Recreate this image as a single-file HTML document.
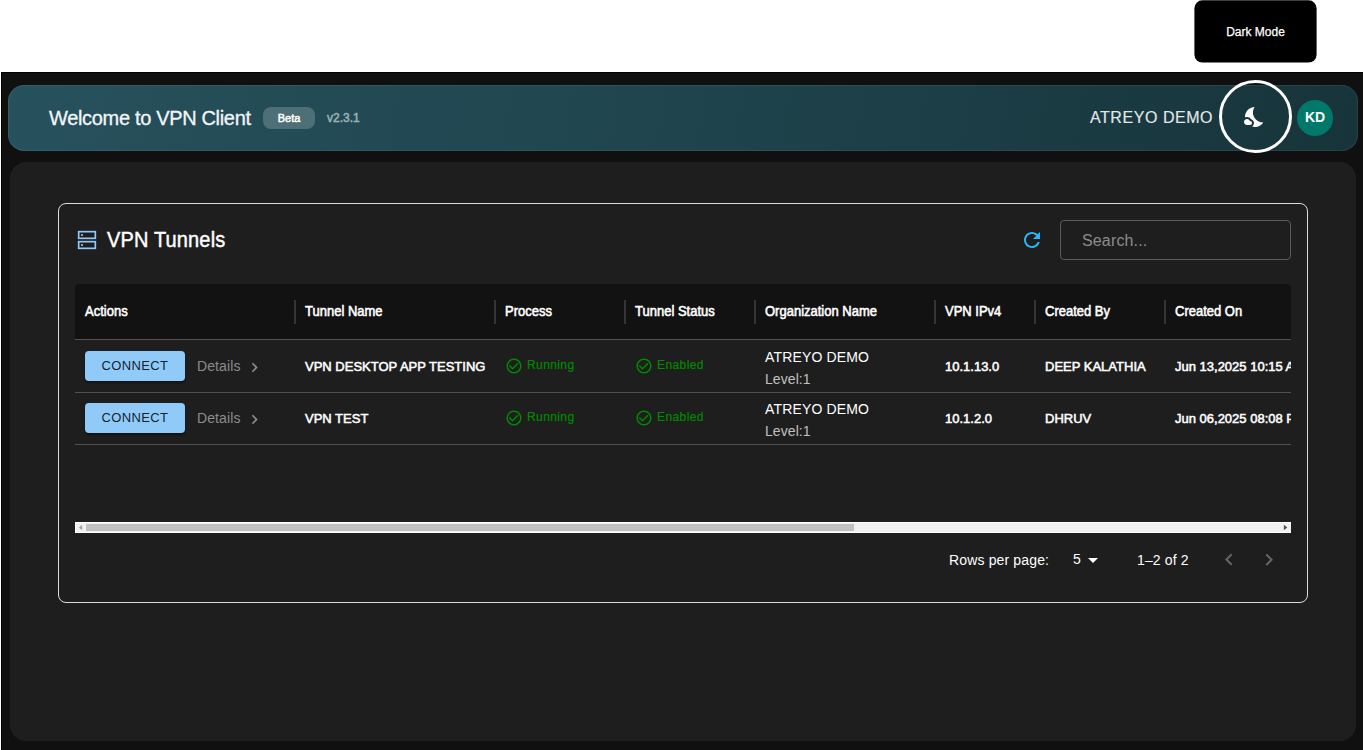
<!DOCTYPE html>
<html lang="en">
<head>
<meta charset="utf-8">
<title>VPN Client</title>
<style>
*{box-sizing:border-box;margin:0;padding:0}
html,body{width:1363px;height:750px;overflow:hidden;background:#fff;font-family:"Liberation Sans",Arial,sans-serif;}
body{position:relative}
.tipbg{position:absolute;left:1190px;top:0;width:132px;height:66px}
.tooltip{position:absolute;left:1194px;top:25px;width:123px;text-align:center;color:#fff;font-size:12px;line-height:14px;-webkit-text-stroke:0.25px #fff}
.app{position:absolute;left:1px;top:72px;width:1362px;height:678px;background:#101010;border-left:1px solid #000;border-top:1px solid #000}
.header{position:absolute;left:8px;top:85px;width:1350px;height:66px;border-radius:16px;background:linear-gradient(100deg,#27515d 0%,#1f444d 50%,#17343a 100%);box-shadow:inset 0 0 0 1px rgba(255,255,255,0.07)}
.h-title{position:absolute;left:41px;top:21px;font-size:20px;line-height:24px;color:#f2f6f7;letter-spacing:-0.33px;white-space:nowrap;-webkit-text-stroke:0.3px #f2f6f7;transform:scaleY(1.05);transform-origin:0 19px}
.beta{position:absolute;left:255px;top:22px;width:52px;height:22px;border-radius:8px;background:rgba(255,255,255,0.2);color:#fff;font-size:11px;-webkit-text-stroke:0.5px #fff;text-align:center;line-height:22px}
.ver{position:absolute;left:319px;top:26px;font-size:12px;color:#9db2b7;line-height:14px;-webkit-text-stroke:0.5px #9db2b7}
.org{position:absolute;left:1082px;top:23px;font-size:16px;line-height:20px;color:#e3e9e9;white-space:nowrap;letter-spacing:0.55px;-webkit-text-stroke:0.15px #e3e9e9}
.ring{position:absolute;left:1218.9px;top:79.7px;width:73.4px;height:73.4px;border-radius:50%;border:3.2px solid #fff}
.moon{position:absolute;left:1243px;top:105px;width:24px;height:24px;fill:#fff}
.avatar{position:absolute;left:1297px;top:100px;width:36px;height:36px;border-radius:50%;background:#00796b;color:#fff;font-size:14px;font-weight:700;text-align:center;line-height:34px}
.main{position:absolute;left:10px;top:162px;width:1346px;height:579px;background:#1e1e1e;border-radius:16px}
.card{position:absolute;left:58px;top:203px;width:1250px;height:400px;border:1px solid #dcdcdc;border-radius:8px}
.c-icon{position:absolute;left:77px;top:230px;width:20px;height:20px}
.c-title{position:absolute;left:107px;top:228px;font-size:20px;line-height:24px;color:#fff;white-space:nowrap;letter-spacing:0.15px;-webkit-text-stroke:0.4px #fff;transform:scaleY(1.06);transform-origin:0 19px}
.refresh{position:absolute;left:1020px;top:228px;width:24px;height:24px;fill:#29b6f6}
.search{position:absolute;left:1060px;top:220px;width:231px;height:40px;border:1px solid #5a5a5a;border-radius:4px;color:#8c8c8c;font-size:16px;line-height:40px;padding-left:21px;letter-spacing:0.15px}
.thead{position:absolute;left:75px;top:284px;width:1216px;height:55px;background:#121212;border-radius:4px 4px 0 0;overflow:hidden}
.th{position:absolute;top:0;height:55px;line-height:55px;font-size:13px;color:#fff;white-space:nowrap;-webkit-text-stroke:0.52px #fff;transform:translateY(-0.3px) scaleY(1.06);transform-origin:0 32.6px}
.sep{position:absolute;top:16px;width:2px;height:24px;background:#353535}
.hline{position:absolute;left:75px;width:1216px;height:1px;background:#515151}
.row{position:absolute;left:75px;width:1216px;height:52px;overflow:hidden}
.cell{position:absolute;top:1px;height:52px;line-height:52px;font-size:13px;color:#fff;white-space:nowrap;-webkit-text-stroke:0.52px #fff;transform:scaleY(1.05);transform-origin:0 30.5px}
.btn{position:absolute;left:10px;top:11px;width:100px;height:30px;border-radius:4px;background:#90caf9;color:rgba(0,0,0,0.87);font-size:13px;letter-spacing:0.37px;text-align:center;line-height:29px;box-shadow:0 2px 2px rgba(0,0,0,0.4)}
.details{position:absolute;left:122px;top:0;line-height:53px;font-size:14px;letter-spacing:0.1px;color:#8c8c8c}
.chev{position:absolute;left:170.2px;top:17.85px;width:19px;height:19px;fill:#8f8f8f}
.status{position:absolute;top:0;height:52px;line-height:50px;font-size:12px;color:#008a00;letter-spacing:0.4px;-webkit-text-stroke:0.2px #008a00}
.status svg{position:absolute;left:-1px;top:17px;width:18px;height:18px;fill:#008a00}
.org1{position:absolute;left:690px;top:8px;font-size:14px;line-height:18px;color:#fff;letter-spacing:0.15px}
.org2{position:absolute;left:690px;top:30px;font-size:14px;line-height:18px;color:#c0c0c0;letter-spacing:0.07px}
.scroll{position:absolute;left:75px;top:522px;width:1216px;height:11px;background:#f1f1f1;border:1px solid #fff;border-right:0}
.thumb{position:absolute;left:10px;top:1px;width:768px;height:7px;background:#c1c1c1}
.sarr{position:absolute;top:0;width:11px;height:9px}
.foot{position:absolute;top:551px;font-size:14px;line-height:18px;color:#fff;white-space:nowrap;letter-spacing:0.15px}
.ficon{position:absolute;width:24px;height:24px}
</style>
</head>
<body>
<svg class="tipbg" viewBox="0 0 132 66"><rect x="4.4" y="0.3" width="122.2" height="62.3" rx="8" fill="#000"/></svg>
<div class="tooltip">Dark Mode</div>
<div class="app"></div>
<div class="header">
  <div class="h-title">Welcome to VPN Client</div>
  <div class="beta">Beta</div>
  <div class="ver">v2.3.1</div>
  <div class="org">ATREYO DEMO</div>
</div>
<div class="ring"></div>
<svg class="moon" viewBox="0 0 24 24"><path d="M11.1 12.08c-2.33-4.51-.5-8.48.53-10.07C6.27 2.2 1.98 6.59 1.98 12c0 .14.02.28.02.42.62-.27 1.29-.42 2-.42 1.66 0 3.18.83 4.1 2.15 1.67.48 2.9 2.02 2.9 3.85 0 1.52-.87 2.83-2.12 3.51.98.32 2.03.5 3.11.5 3.5 0 6.58-1.8 8.37-4.52-2.36.23-6.98-.97-9.26-5.41z"/><path d="M7 16h-.18C6.4 14.84 5.3 14 4 14c-1.66 0-3 1.34-3 3s1.34 3 3 3h3c1.1 0 2-.9 2-2s-.9-2-2-2z"/></svg>
<div class="avatar">KD</div>
<div class="main"></div>
<div class="card"></div>
<svg class="c-icon" viewBox="0 0 24 24" fill="none" stroke="#90caf9" stroke-width="2"><rect x="2" y="2" width="20" height="8"/><rect x="2" y="14" width="20" height="8"/><circle cx="6" cy="6" r="1.3" fill="#90caf9" stroke="none"/><circle cx="6" cy="18" r="1.3" fill="#90caf9" stroke="none"/></svg>
<div class="c-title">VPN Tunnels</div>
<svg class="refresh" viewBox="0 0 24 24"><path d="M17.65 6.35C16.2 4.9 14.21 4 12 4c-4.42 0-7.99 3.58-7.99 8s3.57 8 7.99 8c3.73 0 6.84-2.55 7.73-6h-2.08c-.82 2.33-3.04 4-5.65 4-3.31 0-6-2.69-6-6s2.69-6 6-6c1.66 0 3.14.69 4.22 1.78L13 11h7V4l-2.35 2.35z"/></svg>
<div class="search">Search...</div>
<div class="thead">
  <div class="th" style="left:10px">Actions</div>
  <div class="sep" style="left:219px"></div>
  <div class="th" style="left:230px">Tunnel Name</div>
  <div class="sep" style="left:419px"></div>
  <div class="th" style="left:430px">Process</div>
  <div class="sep" style="left:549px"></div>
  <div class="th" style="left:560px">Tunnel Status</div>
  <div class="sep" style="left:679px"></div>
  <div class="th" style="left:690px">Organization Name</div>
  <div class="sep" style="left:859px"></div>
  <div class="th" style="left:870px">VPN IPv4</div>
  <div class="sep" style="left:959px"></div>
  <div class="th" style="left:970px">Created By</div>
  <div class="sep" style="left:1089px"></div>
  <div class="th" style="left:1100px">Created On</div>
</div>
<div class="hline" style="top:339px"></div>
<div class="row" style="top:340px">
  <div class="btn">CONNECT</div>
  <div class="details">Details</div>
  <svg class="chev" viewBox="0 0 24 24"><path d="M10 6 8.590 7.410 13.170 12l-4.580 4.590L10 18l6-6z"/></svg>
  <div class="cell" style="left:230px">VPN DESKTOP APP TESTING</div>
  <div class="status" style="left:431px;padding-left:21px"><svg viewBox="0 0 24 24"><path d="M16.59 7.58 10 14.17l-3.59-3.58L5 12l5 5 8-8zM12 2C6.48 2 2 6.480 2 12s4.480 10 10 10 10-4.480 10-10S17.520 2 12 2zm0 18c-4.420 0-8-3.580-8-8s3.580-8 8-8 8 3.580 8 8-3.580 8-8 8z"/></svg>Running</div>
  <div class="status" style="left:561px;padding-left:21px"><svg viewBox="0 0 24 24"><path d="M16.59 7.58 10 14.17l-3.59-3.58L5 12l5 5 8-8zM12 2C6.48 2 2 6.480 2 12s4.480 10 10 10 10-4.480 10-10S17.520 2 12 2zm0 18c-4.420 0-8-3.580-8-8s3.580-8 8-8 8 3.580 8 8-3.580 8-8 8z"/></svg>Enabled</div>
  <div class="org1">ATREYO DEMO</div>
  <div class="org2">Level:1</div>
  <div class="cell" style="left:870px">10.1.13.0</div>
  <div class="cell" style="left:970px">DEEP KALATHIA</div>
  <div class="cell" style="left:1100px">Jun 13,2025 10:15 AM</div>
</div>
<div class="hline" style="top:392px"></div>
<div class="row" style="top:392px">
  <div class="btn">CONNECT</div>
  <div class="details">Details</div>
  <svg class="chev" viewBox="0 0 24 24"><path d="M10 6 8.590 7.410 13.170 12l-4.580 4.590L10 18l6-6z"/></svg>
  <div class="cell" style="left:230px">VPN TEST</div>
  <div class="status" style="left:431px;padding-left:21px"><svg viewBox="0 0 24 24"><path d="M16.59 7.58 10 14.17l-3.59-3.58L5 12l5 5 8-8zM12 2C6.48 2 2 6.480 2 12s4.480 10 10 10 10-4.480 10-10S17.520 2 12 2zm0 18c-4.420 0-8-3.580-8-8s3.580-8 8-8 8 3.580 8 8-3.580 8-8 8z"/></svg>Running</div>
  <div class="status" style="left:561px;padding-left:21px"><svg viewBox="0 0 24 24"><path d="M16.59 7.58 10 14.17l-3.59-3.58L5 12l5 5 8-8zM12 2C6.48 2 2 6.480 2 12s4.480 10 10 10 10-4.480 10-10S17.520 2 12 2zm0 18c-4.420 0-8-3.580-8-8s3.580-8 8-8 8 3.580 8 8-3.580 8-8 8z"/></svg>Enabled</div>
  <div class="org1">ATREYO DEMO</div>
  <div class="org2">Level:1</div>
  <div class="cell" style="left:870px">10.1.2.0</div>
  <div class="cell" style="left:970px">DHRUV</div>
  <div class="cell" style="left:1100px">Jun 06,2025 08:08 PM</div>
</div>
<div class="hline" style="top:444px"></div>
<div class="scroll"><div class="thumb"></div><svg class="sarr" style="left:0" viewBox="0 0 11 9"><path d="M2.9 4.5L6.2 1.8v5.4z" fill="#a3a3a3"/></svg><svg class="sarr" style="left:1204px" viewBox="0 0 11 9"><path d="M7.2 4.5L3.9 1.8v5.4z" fill="#505050"/></svg></div>
<div class="foot" style="left:949px">Rows per page:</div>
<div class="foot" style="left:1073px;top:550px">5</div>
<svg class="ficon" style="left:1081px;top:548px" viewBox="0 0 24 24" fill="#fff"><path d="M7 10l5 5 5-5z"/></svg>
<div class="foot" style="left:1137px">1–2 of 2</div>
<svg class="ficon" style="left:1217px;top:548px" viewBox="0 0 24 24" fill="#666"><path d="M15.41 16.09l-4.580-4.590 4.580-4.590L14 5.500l-6 6 6 6z"/></svg>
<svg class="ficon" style="left:1257px;top:548px" viewBox="0 0 24 24" fill="#666"><path d="M8.590 16.340l4.580-4.590-4.580-4.590L10 5.750l6 6-6 6z"/></svg>
</body>
</html>
